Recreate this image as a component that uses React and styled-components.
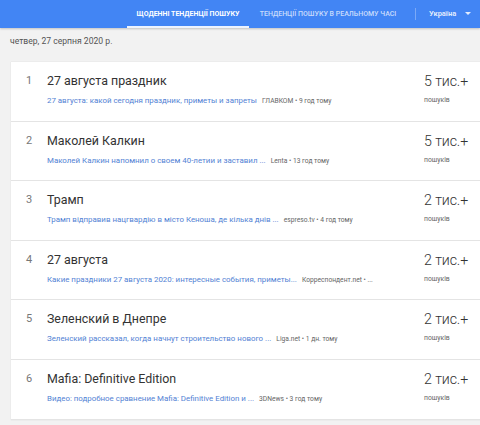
import React from "react";
import styled, { createGlobalStyle } from "styled-components";

const Global = createGlobalStyle`
  html, body { margin: 0; padding: 0; background: #f2f2f2; }
  body { font-family: Roboto, "Noto Sans", Arial, sans-serif; width: 480px; height: 425px; overflow: hidden; }
  * { box-sizing: border-box; }
`;

const Header = styled.header`
  height: 28px;
  background: #4285f4;
  display: flex;
  align-items: stretch;
  padding-left: 127px;
  box-shadow: 0 1px 2px rgba(0,0,0,0.2);
`;

const Tab = styled.div`
  display: flex;
  align-items: center;
  justify-content: center;
  width: ${p => p.$w}px;
  font-size: 7px;
  font-weight: ${p => (p.$active ? 700 : 500)};
  color: ${p => (p.$active ? "#fff" : "rgba(255,255,255,0.72)")};
  border-bottom: 2px solid ${p => (p.$active ? "rgba(255,255,255,0.9)" : "transparent")};
  padding-top: 2px;
  white-space: nowrap;
`;

const Sep = styled.div`
  width: 1px;
  height: 12px;
  background: rgba(255,255,255,0.3);
  align-self: center;
  margin-left: 8px;
`;

const Country = styled.div`
  display: flex;
  align-items: center;
  gap: 9px;
  margin-left: 13px;
  color: rgba(255,255,255,0.85);
  font-size: 7.5px;
  font-weight: 700;
  padding-bottom: 1px;
`;

const Arrow = styled.span`
  width: 0;
  height: 0;
  border-left: 3px solid transparent;
  border-right: 3px solid transparent;
  border-top: 3px solid rgba(255,255,255,0.85);
`;

const DateLine = styled.div`
  padding: 8px 0 0 10px;
  height: 34px;
  font-size: 8.6px;
  color: #555;
  line-height: 11px;
`;

const Card = styled.div`
  margin-left: 11px;
  background: #fff;
  box-shadow: 0 0 1px rgba(0,0,0,0.15);
`;

const Row = styled.div`
  height: 59.6px;
  display: flex;
  border-bottom: 1px solid #e4e4e4;
  padding-top: 11px;
`;

const Num = styled.div`
  width: 36px;
  padding-left: 15px;
  font-size: 11px;
  color: #777;
  line-height: 16px;
`;

const Main = styled.div`
  flex: 1;
  min-width: 0;
  display: flex;
  flex-direction: column;
`;

const Title = styled.div`
  font-size: 12.4px;
  color: #333;
  line-height: 16px;
`;

const Sub = styled.div`
  margin-top: 6px;
  display: flex;
  align-items: baseline;
  white-space: nowrap;
  line-height: 11px;
`;

const Link = styled.span`
  font-size: 7.9px;
  color: #5282d4;
`;

const Source = styled.span`
  font-size: 6.7px;
  color: #666;
  margin-left: 5px;
`;

const Right = styled.div`
  width: 56px;
  display: flex;
  flex-direction: column;
`;

const Count = styled.div`
  font-size: 14.2px;
  color: #333;
  line-height: 16px;
  font-weight: 300;
  letter-spacing: -0.1px;
`;

const Searches = styled.div`
  margin-top: 6px;
  font-size: 6.8px;
  color: #666;
  line-height: 11px;
`;

const rows = [
  { t: "27 августа праздник", l: "27 августа: какой сегодня праздник, приметы и запреты", s: "ГЛАВКОМ • 9 год тому", c: "5 тис.+" },
  { t: "Маколей Калкин", l: "Маколей Калкин напомнил о своем 40-летии и заставил ...", s: "Lenta • 13 год тому", c: "5 тис.+" },
  { t: "Трамп", l: "Трамп відправив нацгвардію в місто Кеноша, де кілька днів ...", s: "espreso.tv • 4 год тому", c: "2 тис.+" },
  { t: "27 августа", l: "Какие праздники 27 августа 2020: интересные события, приметы...", s: "Корреспондент.net • ...", c: "2 тис.+" },
  { t: "Зеленский в Днепре", l: "Зеленский рассказал, когда начнут строительство нового ...", s: "Liga.net • 1 дн. тому", c: "2 тис.+" },
  { t: "Mafia: Definitive Edition", l: "Видео: подробное сравнение Mafia: Definitive Edition и ...", s: "3DNews • 3 год тому", c: "2 тис.+" },
];

export default function App() {
  return (
    <>
      <Global />
      <Header>
        <Tab $active $w={122}>ЩОДЕННІ ТЕНДЕНЦІЇ ПОШУКУ</Tab>
        <Tab $w={158}>ТЕНДЕНЦІЇ ПОШУКУ В РЕАЛЬНОМУ ЧАСІ</Tab>
        <Sep />
        <Country>
          Україна
          <Arrow />
        </Country>
      </Header>
      <DateLine>четвер, 27 серпня 2020 р.</DateLine>
      <Card>
        {rows.map((r, i) => (
          <Row key={i}>
            <Num>{i + 1}</Num>
            <Main>
              <Title>{r.t}</Title>
              <Sub>
                <Link>{r.l}</Link>
                <Source>{r.s}</Source>
              </Sub>
            </Main>
            <Right>
              <Count>{r.c}</Count>
              <Searches>пошуків</Searches>
            </Right>
          </Row>
        ))}
      </Card>
    </>
  );
}
